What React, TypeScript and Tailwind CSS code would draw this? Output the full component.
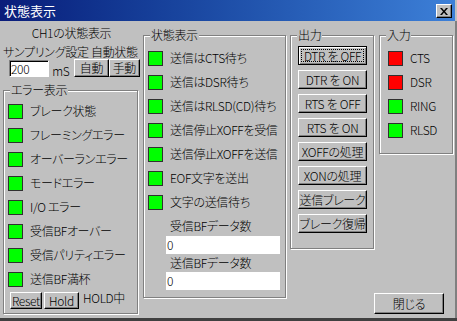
import type { ReactNode } from "react";

const raised =
  "bg-[#c0c0c0] border border-t-white border-l-white border-r-black border-b-black shadow-[inset_-1px_-1px_0_#808080]";

function Lamp({ red }: { red?: boolean }) {
  return (
    <div
      className={`h-[15px] w-[15px] shrink-0 border border-[#303030] ${red ? "bg-[#ff0000]" : "bg-[#00ff00]"}`}
    />
  );
}

function Group({ label, className, children }: { label: string; className: string; children: ReactNode }) {
  return (
    <div className={`relative border border-[#808080] shadow-[1px_1px_0_#fff,inset_1px_1px_0_#fff] ${className}`}>
      <span className="absolute -top-[8px] left-[6px] bg-[#c0c0c0] px-[1px] leading-[14px]">{label}</span>
      {children}
    </div>
  );
}

function Btn({ children, className }: { children: ReactNode; className: string }) {
  return (
    <div className={`flex items-center justify-center whitespace-nowrap leading-[14px] ${raised} ${className}`}>
      {children}
    </div>
  );
}

const errors = [
  "ブレーク状態",
  "フレーミングエラー",
  "オーバーランエラー",
  "モードエラー",
  "I/O エラー",
  "受信BFオーバー",
  "受信パリティエラー",
  "送信BF満杯",
];

const states = [
  "送信はCTS待ち",
  "送信はDSR待ち",
  "送信はRLSD(CD)待ち",
  "送信停止XOFFを受信",
  "送信停止XOFFを送信",
  "EOF文字を送出",
  "文字の送信待ち",
];

const outputs = ["DTR を ON", "RTS を OFF", "RTS を ON", "XOFFの処理", "XONの処理", "送信ブレーク", "ブレーク復帰"];

const inputs = [
  { name: "CTS", red: true },
  { name: "DSR", red: true },
  { name: "RING", red: false },
  { name: "RLSD", red: false },
];

export default function App() {
  return (
    <div className="flex h-[321px] w-[457px] flex-col overflow-hidden border-b-[3px] border-[#404040] bg-[#c0c0c0] font-['Noto_Sans_CJK_JP',sans-serif] text-[12px] font-light leading-[14px] tracking-[-0.3px] text-black [font-feature-settings:'palt']">
      {/* title bar */}
      <div className="mr-[2px] flex h-[21px] shrink-0 items-center justify-between bg-gradient-to-r from-[#0a1c7a] to-[#3d80d8] pl-[4px] pr-[3px]">
        <span className="text-[13px] font-normal tracking-normal text-white [font-feature-settings:normal]">状態表示</span>
        <div className={`mt-[1px] flex h-[14px] w-[16px] items-center justify-center ${raised}`}>
          <svg width="8" height="7" viewBox="0 0 8 7">
            <path d="M0 0h2l2 2.5L6 0h2L5 3.5 8 7H6L4 4.5 2 7H0l3-3.5z" fill="#000" />
          </svg>
        </div>
      </div>

      <div className="flex flex-1 border-r-2 border-[#808080]">
        {/* left column */}
        <div className="ml-[3px] flex w-[137px] flex-col">
          <div className="mt-[5px] h-[14px] text-center">CH1の状態表示</div>
          <div className="mt-[5px] h-[14px] whitespace-nowrap">サンプリング設定 自動状態</div>
          <div className="flex h-[18px] items-end">
            <div className="ml-[6px] h-[17px] w-[41px] border border-t-[#808080] border-l-[#808080] border-r-white border-b-white bg-white pl-[1px] leading-[15px] shadow-[inset_1px_1px_0_#000]">
              200
            </div>
            <span className="ml-[3px] leading-[13px]">mS</span>
            <Btn className="ml-[5px] h-[18px] w-[35px]">自動</Btn>
            <Btn className="h-[18px] w-[32px]">手動</Btn>
          </div>
          <Group label="エラー表示" className="mt-[13px] h-[224px] w-[135px] pt-[8px]">
            {errors.map((e) => (
              <div key={e} className="flex h-[24px] items-center pl-[4px]">
                <Lamp />
                <span className="ml-[7px] whitespace-nowrap">{e}</span>
              </div>
            ))}
            <div className="mt-[1px] flex items-center pl-[6px]">
              <Btn className="h-[17px] w-[32px]">Reset</Btn>
              <Btn className="ml-[2px] h-[17px] w-[35px]">Hold</Btn>
              <span className="-mt-[5px] ml-[4px]">HOLD中</span>
            </div>
          </Group>
        </div>

        {/* middle */}
        <Group label="状態表示" className="mt-[14px] ml-[3px] h-[263px] w-[143px] pt-[10px]">
          {states.map((s) => (
            <div key={s} className="flex h-[24px] items-center pl-[4px]">
              <Lamp />
              <span className="ml-[7px] whitespace-nowrap">{s}</span>
            </div>
          ))}
          <div className="mt-[5px] h-[14px] pl-[26px]">受信BFデータ数</div>
          <div className="mt-[3px] ml-[22px] h-[18px] w-[114px] bg-white pl-[1px] leading-[17px]">0</div>
          <div className="mt-[2px] h-[14px] pl-[26px]">送信BFデータ数</div>
          <div className="mt-[2px] ml-[22px] h-[18px] w-[114px] bg-white pl-[1px] leading-[17px]">0</div>
        </Group>

        {/* right */}
        <div className="ml-[4px] flex flex-col">
          <div className="flex items-start">
            <Group label="出力" className="mt-[14px] h-[214px] w-[84px] pt-[10px] pl-[7px]">
              <div className="flex flex-col gap-[5px]">
                <div className="flex h-[19px] w-[69px] border border-black bg-[#c0c0c0] shadow-[inset_1px_1px_0_#fff,inset_-1px_-1px_0_#808080]">
                  <div className="m-[2px] flex flex-1 items-center justify-center whitespace-nowrap border border-dotted border-black leading-[12px]">
                    DTR を OFF
                  </div>
                </div>
                {outputs.map((o) => (
                  <Btn key={o} className="h-[19px] w-[69px]">
                    {o}
                  </Btn>
                ))}
              </div>
            </Group>
            <Group label="入力" className="mt-[14px] ml-[5px] h-[119px] w-[74px] pt-[10px]">
              {inputs.map((i) => (
                <div key={i.name} className="flex h-[24px] items-center pl-[8px]">
                  <Lamp red={i.red} />
                  <span className="ml-[7px]">{i.name}</span>
                </div>
              ))}
            </Group>
          </div>
          <Btn className="mt-[44px] ml-[84px] h-[21px] w-[70px]">閉じる</Btn>
        </div>
      </div>
    </div>
  );
}
